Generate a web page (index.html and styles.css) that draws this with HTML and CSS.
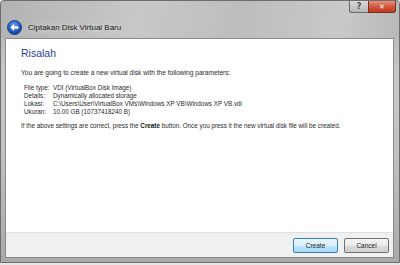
FILE: index.html
```html
<html>
  <head>
    <link rel="stylesheet" href="styles.css">
  </head>
  <body>
    <div class="window">
      <div class="titlebar">
        <div class="captionButtons">
          <span class="capBtn help">?</span>
          <span class="capBtn close">&#x2715;</span>
        </div>
        <div class="caption">
          <svg class="backIcon" width="15" height="15" viewBox="0 0 15 15">
            <defs>
              <radialGradient id="bg" cx="0.45" cy="0.35" r="0.7">
                <stop offset="0" stop-color="#6fa8f0" />
                <stop offset="0.6" stop-color="#2359c4" />
                <stop offset="1" stop-color="#123a8e" />
              </radialGradient>
            </defs>
            <circle cx="7.5" cy="7.5" r="7" fill="url(#bg)" stroke="#0d2f75" stroke-width="0.8" />
            <path d="M3.4 7.5 L7 4 L7 6.2 L11.4 6.2 L11.4 8.8 L7 8.8 L7 11 Z" fill="#fff" />
          </svg>
          <span class="captionText">Ciptakan Disk Virtual Baru</span>
        </div>
      </div>
      <div class="client">
        <div class="page">
          <h1>Risalah</h1>
          <p class="intro">You are going to create a new virtual disk with the following parameters:</p>
          <div class="params">
            <span>File type:</span><span>VDI (VirtualBox Disk Image)</span>
            <span>Details:</span><span>Dynamically allocated storage</span>
            <span>Lokasi:</span><span>C:\Users\User\VirtualBox VMs\Windows XP VB\Windows XP VB.vdi</span>
            <span>Ukuran:</span><span>10.00 GB (10737418240 B)</span>
          </div>
          <p class="note">If the above settings are correct, press the <b>Create</b> button. Once you press it the new virtual disk file will be created.</p>
        </div>
        <div class="footer">
          <button class="btn default">Create</button>
          <button class="btn">Cancel</button>
        </div>
      </div>
    </div>
  </body>
</html>
```
FILE: styles.css
```css
body {
  margin: 0;
  background: #e6e6e6;
  font-family: "Liberation Sans", Arial, sans-serif;
}

.window {
  width: 398px;
  height: 261px;
  display: flex;
  flex-direction: column;
  border: 1px solid #6d6d6d;
  border-radius: 4px 4px 0 0;
  background: linear-gradient(to bottom, #b0b0b0 0%, #c9c9c9 30%, #c0c0c0 60%, #a9a9a9 100%);
}

.titlebar {
  height: 37px;
  display: flex;
  flex-direction: column;
  background: linear-gradient(100deg, #b3b3b3 0%, #c8c8c8 35%, #bdbdbd 60%, #c9c9c9 85%, #b8b8b8 100%);
  border-radius: 4px 4px 0 0;
}

.captionButtons {
  display: flex;
  justify-content: flex-end;
  padding-right: 3px;
  height: 12px;
}
.capBtn {
  height: 11px;
  display: flex;
  align-items: center;
  justify-content: center;
  font-family: "DejaVu Sans", sans-serif;
  font-weight: bold;
  color: #fff;
  border: 1px solid #6c6c6c;
  border-top: none;
}
.help {
  width: 18px;
  font-size: 8px;
  color: #4a4a4a;
  border-radius: 0 0 0 3px;
  border-right: none;
  background: linear-gradient(to bottom, #d9d9d9, #b7b7b7);
}
.close {
  width: 26px;
  font-size: 7px;
  border-color: #7c2a1c;
  border-radius: 0 0 3px 0;
  background: linear-gradient(to bottom, #e8917f 0%, #d0593f 50%, #c03a22 100%);
}

.caption {
  display: flex;
  align-items: center;
  padding: 7px 0 0 6px;
  gap: 6px;
}
.captionText {
  font-size: 8px;
  color: #1a1a1a;
  text-shadow: 0 0 6px #fff;
}

.client {
  flex: 1;
  display: flex;
  flex-direction: column;
  margin: 0 5px 4px 4px;
  border: 1px solid #8a8a8a;
}

.page {
  flex: 1;
  background: #fff;
  padding: 8px 15px 0;
}
h1 {
  margin: 0 0 10px;
  font-size: 10.5px;
  line-height: 12px;
  font-weight: normal;
  color: #1e4592;
}
p {
  margin: 0;
  font-size: 6.3px;
  line-height: 8px;
  color: #2a2a2a;
}
.intro {
  margin-bottom: 7px;
  font-size: 6.6px;
}
.params {
  display: grid;
  grid-template-columns: 29px auto;
  margin: 0 0 6px 3px;
  font-size: 6.3px;
  line-height: 8px;
  color: #2a2a2a;
}
.note b {
  color: #111;
}

.footer {
  height: 24px;
  display: flex;
  justify-content: flex-end;
  align-items: center;
  gap: 6px;
  padding-right: 4px;
  background: #f0f0f0;
  border-top: 1px solid #dfdfdf;
}
.btn {
  width: 45px;
  height: 15px;
  padding: 0;
  font-family: inherit;
  font-size: 6.5px;
  color: #222;
  border: 1px solid #707070;
  border-radius: 2px;
  background: linear-gradient(to bottom, #f3f3f3 0%, #ebebeb 50%, #dcdcdc 51%, #d0d0d0 100%);
}
.btn.default {
  border-color: #3c7fb1;
  background: linear-gradient(to bottom, #e8f5fc 0%, #d9effa 50%, #bee6fd 51%, #a7d9f5 100%);
}
```
